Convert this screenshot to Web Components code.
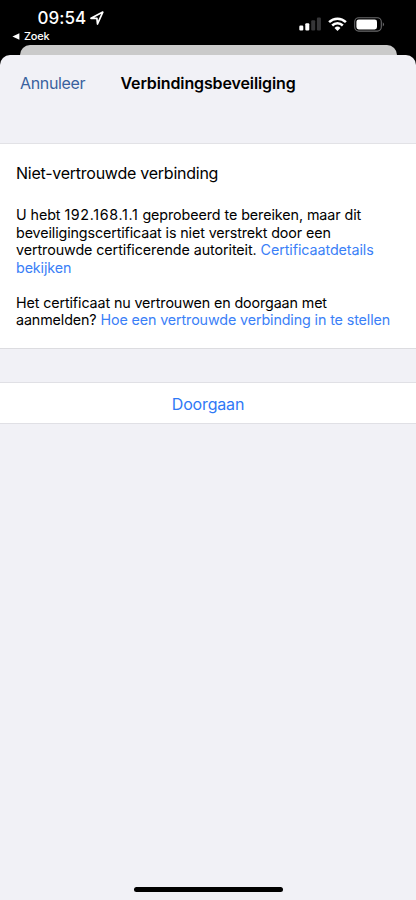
<!DOCTYPE html>
<html lang="nl"><head><meta charset="utf-8"><title>Verbindingsbeveiliging</title>
<style>
html,body{margin:0;height:100%}
body{background:#000;font-family:Inter,"Liberation Sans",sans-serif;overflow:hidden}
</style></head><body>
<phone-screen></phone-screen>
<script>
const define=(name,html)=>customElements.define(name,class extends HTMLElement{
  constructor(){super();this.attachShadow({mode:"open"}).innerHTML=html;}
});
define("status-bar",`<style>
:host{display:flex;justify-content:space-between;height:45px;color:#fff;box-sizing:border-box;padding:0 31px 0 12px}
.left{display:flex;flex-direction:column}
.time{display:flex;align-items:center;gap:4px;padding:7px 0 0 25.5px;height:21px;font-size:17px;font-weight:550;letter-spacing:.05px}
.back{display:flex;align-items:center;gap:4px;height:16px;font-size:11px;font-weight:500;letter-spacing:-.2px}
.icons{display:flex;align-items:center;height:18px;padding-top:15px;gap:7px}
svg{display:block}
</style>
<div class="left"><div class="time"><span>09:54</span><svg width="14" height="14" viewBox="0 0 14 14"><path d="M1 7.3 12.8 1.1 7.5 13 6.9 7.3Z" fill="none" stroke="#fff" stroke-width="1.7" stroke-linejoin="round"/></svg></div>
<div class="back"><svg width="8" height="7" viewBox="0 0 8 7"><path d="M.4 3.5 7.4.2v6.6Z" fill="#fff"/></svg><span>Zoek</span></div></div>
<div class="icons"><svg width="22" height="14" viewBox="0 0 22 14"><rect x="0.3" y="8.6" width="4" height="5" rx="1.1" fill="#fff"/><rect x="6.3" y="6.2" width="4" height="7.4" rx="1.1" fill="#fff"/><rect x="12.2" y="3.2" width="4" height="10.4" rx="1.1" fill="#363638"/><rect x="17.9" y=".6" width="4" height="13" rx="1.1" fill="#363638"/></svg>
<svg width="19" height="14" viewBox="0 0 19 14"><g fill="none" stroke="#fff" stroke-width="2.5"><path d="M1.1 5.1a12 12 0 0 1 16.8 0"/><path d="M4.2 8.5a7.5 7.5 0 0 1 10.6 0"/></g><path d="M6.5 10.9a4.3 4.3 0 0 1 6 0L9.5 13.9Z" fill="#fff"/></svg>
<svg width="31" height="15" viewBox="0 0 31 15"><rect x=".7" y=".7" width="26.6" height="13.4" rx="4" fill="none" stroke="#69696b" stroke-width="1.1"/><rect x="2.4" y="2.4" width="20.6" height="10" rx="2.3" fill="#fff"/><path d="M28.8 5.2q2.4 2.2 0 4.4Z" fill="#69696b"/></svg></div>`);
define("nav-header",`<style>
:host{display:grid;grid-template-columns:1fr auto 1fr;height:89px;box-sizing:border-box;padding:16.5px 20px 0;line-height:22px;font-size:16px;border-bottom:1px solid #e2e2e6}
.cancel{color:#39619e;letter-spacing:-.34px}.title{font-weight:600;color:#000;letter-spacing:-.12px}
</style><span class="cancel"><slot name="cancel"></slot></span><span class="title"><slot name="title"></slot></span>`);
define("text-line",`<style>:host{display:block;height:17.5px;white-space:nowrap}</style><slot></slot>`);
define("text-run",`<style>:host{display:inline}:host([link]){color:#3b80f7}:host([numeric]){letter-spacing:.65px}:host([wide]){letter-spacing:-.075px}</style><slot></slot>`);
define("message-panel",`<style>
:host{display:block;height:205px;box-sizing:border-box;background:#fff;padding:18px 16px 0;border-bottom:1px solid #dcdce0;color:#000}
h2{margin:0;font-size:16px;line-height:22px;font-weight:400;white-space:nowrap;letter-spacing:-.25px}
.body{font-size:14.3px;line-height:17.5px;padding-top:22px;letter-spacing:-.115px}
</style><h2><slot name="heading"></slot></h2><div class="body"><slot></slot></div>`);
define("action-row",`<style>
:host{display:flex;justify-content:center;align-items:center;height:42px;box-sizing:border-box;margin-top:33px;padding-top:2px;background:#fff;border:solid #e0e0e5;border-width:1px 0;font-size:16px;letter-spacing:-.15px;color:#2f78f6}
</style><slot></slot>`);
define("home-indicator",`<style>:host{display:block;width:149px;height:5px;border-radius:3px;background:#000;margin:auto auto 8px}</style>`);
define("phone-screen",`<style>
:host{display:flex;flex-direction:column;height:900px;width:416px;background:#000}
.behind{height:10px;margin:0 19.5px;border-radius:10px 10px 0 0;background:#cacaca}
.sheet{display:flex;flex-direction:column;flex:1;background:#f1f1f6;border-radius:10px 10px 0 0}
.corner{display:flex;flex:1}
.gap{height:17.5px}
</style>
<status-bar></status-bar><div class="behind"></div><div class="corner"><div class="sheet">
<nav-header><text-run slot="cancel">Annuleer</text-run><text-run slot="title">Verbindingsbeveiliging</text-run></nav-header>
<message-panel><text-run slot="heading">Niet-vertrouwde verbinding</text-run>
<text-line><text-run wide>U hebt <text-run numeric>192.168.1.1</text-run> geprobeerd te bereiken, maar dit</text-run></text-line>
<text-line><text-run>beveiligingscertificaat is niet verstrekt door een</text-run></text-line>
<text-line><text-run wide>vertrouwde certificerende autoriteit.</text-run> <text-run link wide>Certificaatdetails</text-run></text-line>
<text-line><text-run link>bekijken</text-run></text-line>
<div class="gap"></div>
<text-line><text-run>Het certificaat nu vertrouwen en doorgaan met</text-run></text-line>
<text-line><text-run>aanmelden?</text-run> <text-run link>Hoe een vertrouwde verbinding in te stellen</text-run></text-line>
</message-panel>
<action-row><text-run>Doorgaan</text-run></action-row>
<home-indicator></home-indicator></div></div>`);
</script></body></html>
